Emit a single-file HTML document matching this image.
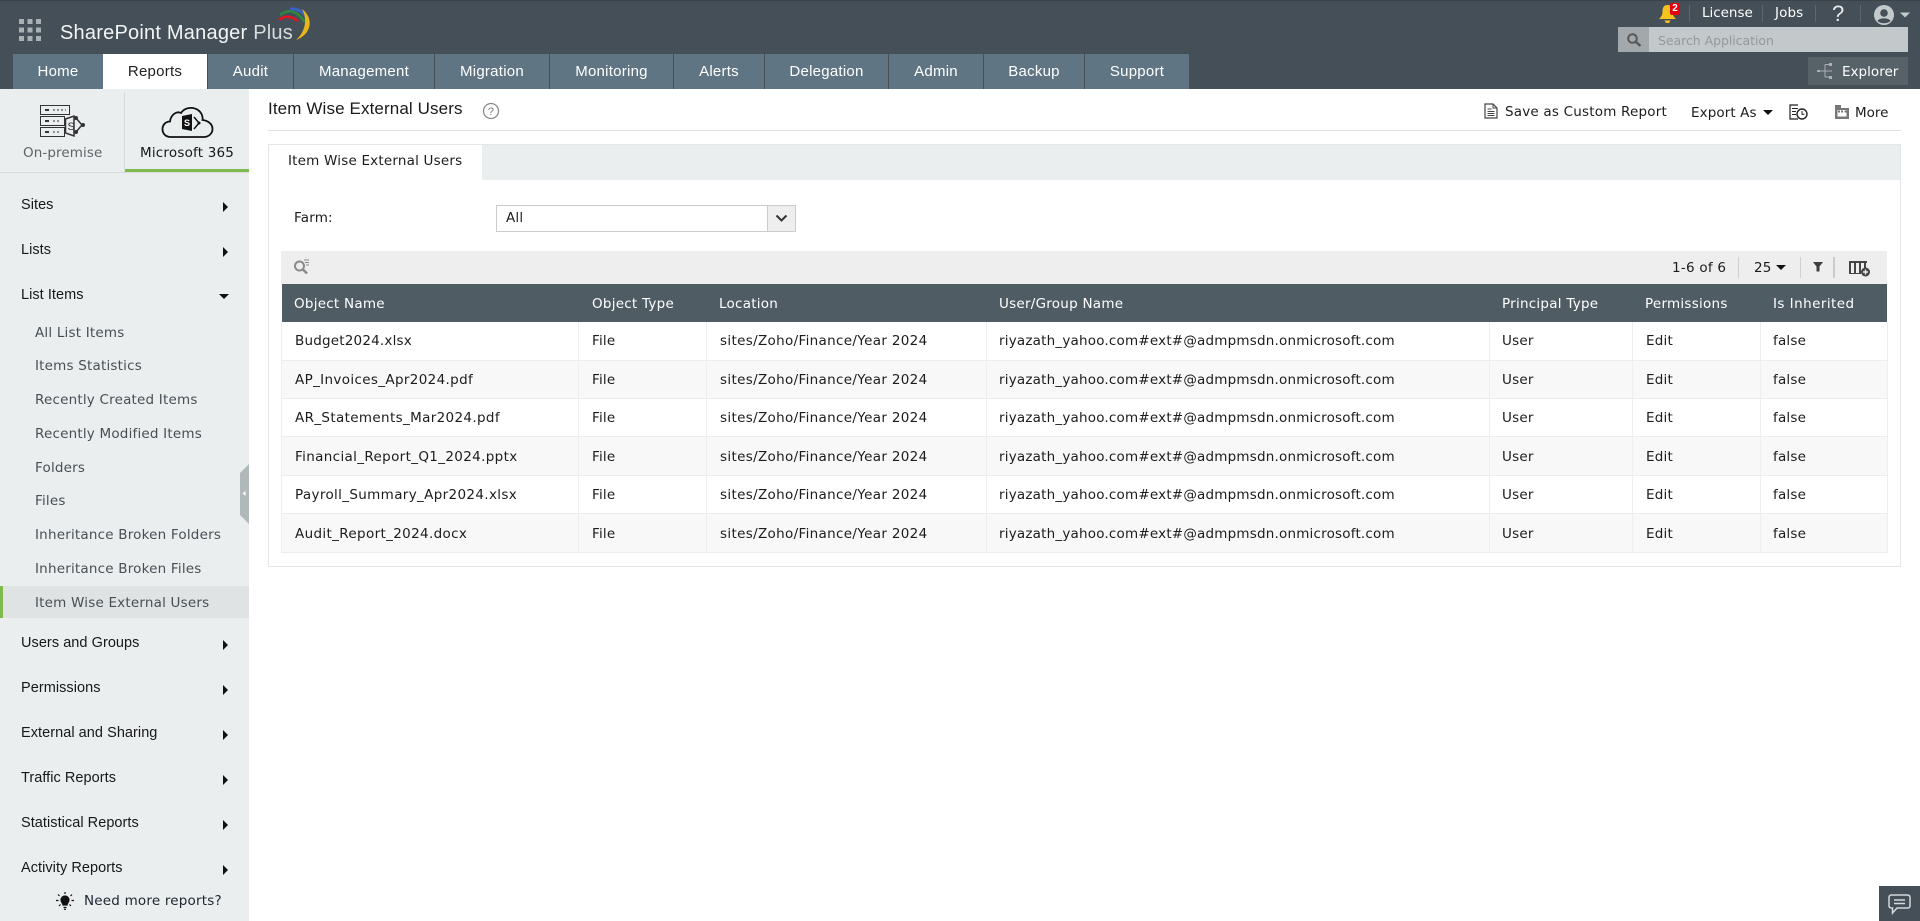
<!DOCTYPE html>
<html lang="en"><head><meta charset="utf-8"><title>SharePoint Manager Plus</title>
<style>
html,body{margin:0;padding:0;width:1920px;height:921px;overflow:hidden;background:#fff}
body{position:relative;font-family:"DejaVu Sans",sans-serif;font-size:13.5px;color:#1c1c1c;letter-spacing:.2px}
.a{position:absolute;white-space:nowrap;height:20px;line-height:20px}
.b{position:absolute}
.l{font-family:"Liberation Sans",sans-serif}
.tab{position:absolute;top:54px;height:35px;line-height:36px;background:#5f7583;color:#fff;text-align:center;font-family:"Liberation Sans",sans-serif;font-size:15px;letter-spacing:.25px}
.h{font-family:"Liberation Sans",sans-serif;font-size:14.5px;left:21px;color:#16181c;letter-spacing:.05px}
.s{left:35px;color:#474f55}
.ar{position:absolute;left:223px;width:0;height:0;border-left:5px solid #111;border-top:5px solid transparent;border-bottom:5px solid transparent}
.th{color:#fff;top:294px;letter-spacing:.25px}
.td{color:#1c1c1c}
.u{letter-spacing:.35px}
.loc{letter-spacing:.33px}
.row{position:absolute;left:282px;width:1605px;border-bottom:1px solid #ededed;box-sizing:border-box}
.vl{position:absolute;width:1px;top:322px;height:231px;background:#eeeeee}
</style></head><body>
<!-- Header -->
<div class="b" style="left:0;top:0;width:1920px;height:89px;background:#444f57;border-top:1px solid #3a4147;box-sizing:border-box"></div>
<svg class="b" style="left:19px;top:19px" width="23" height="23"><g fill="#a9b1b5"><rect x="0" y="0" width="5" height="5"/><rect x="8.5" y="0" width="5" height="5"/><rect x="17" y="0" width="5" height="5"/><rect x="0" y="8.500" width="5" height="5"/><rect x="8.500" y="8.500" width="5" height="5"/><rect x="17" y="8.500" width="5" height="5"/><rect x="0" y="17" width="5" height="5"/><rect x="8.500" y="17" width="5" height="5"/><rect x="17" y="17" width="5" height="5"/></g></svg>
<div class="a l" style="left:60px;top:21px;height:24px;line-height:24px;font-size:20px;color:#f4f5f5;letter-spacing:.22px">SharePoint Manager <span style="color:#d8dcde">Plus</span></div>
<svg class="b" style="left:274px;top:6px" width="40" height="38" viewBox="0 0 40 38" fill="none">
<path d="M5 14Q13 7 24 15" stroke="#e8141c" stroke-width="2.500"/>
<path d="M6 9Q19 -1 31 16" stroke="#2d8a3d" stroke-width="2.500"/>
<path d="M16 3Q28 2 34 14" stroke="#3a62c4" stroke-width="3"/>
<path d="M28 3C40 12 38 28 22 34C31 26 34 14 28 3Z" fill="#e8b51a"/>
</svg>

<div class="tab" style="left:13px;width:90px">Home</div>
<div class="tab" style="left:103px;width:104px;background:#fff;color:#222">Reports</div>
<div class="tab" style="left:208px;width:85px">Audit</div>
<div class="tab" style="left:294px;width:140px">Management</div>
<div class="tab" style="left:435px;width:114px">Migration</div>
<div class="tab" style="left:550px;width:123px">Monitoring</div>
<div class="tab" style="left:674px;width:90px">Alerts</div>
<div class="tab" style="left:765px;width:123px">Delegation</div>
<div class="tab" style="left:889px;width:94px">Admin</div>
<div class="tab" style="left:984px;width:100px">Backup</div>
<div class="tab" style="left:1085px;width:104px">Support</div>

<!-- top right -->
<svg class="b" style="left:1658px;top:4px" width="20" height="20" viewBox="0 0 20 20"><path d="M9.500 1C5.500 1 4.500 4 4.500 7.500C4.500 11 3 13 1 15L18 15C16 13 14.500 11 14.500 7.500C14.500 4 13.500 1 9.500 1Z" fill="#f6c31c"/><path d="M6.500 16.500h6L11 19H8Z" fill="#f6c31c"/></svg>
<div class="b" style="left:1670px;top:3px;width:10px;height:12px;background:#e3000f;border-radius:2px;color:#fff;font:bold 10px/12px 'Liberation Sans',sans-serif;text-align:center;letter-spacing:0">2</div>
<div class="b" style="left:1689px;top:5px;width:1px;height:17px;background:#5d676e"></div>
<div class="b" style="left:1762px;top:5px;width:1px;height:17px;background:#5d676e"></div>
<div class="b" style="left:1815px;top:5px;width:1px;height:17px;background:#5d676e"></div>
<div class="b" style="left:1860px;top:5px;width:1px;height:17px;background:#5d676e"></div>
<div class="a" style="left:1702px;top:3px;color:#fff;letter-spacing:-.02px">License</div>
<div class="a" style="left:1775px;top:3px;color:#fff;letter-spacing:.1px">Jobs</div>
<div class="a l" style="left:1832px;top:3px;color:#e8eaeb;font-size:22px;height:22px;line-height:22px;letter-spacing:0">?</div>
<svg class="b" style="left:1874px;top:5px" width="38" height="21" viewBox="0 0 38 21"><circle cx="10" cy="10" r="10" fill="#c4c9cc"/><circle cx="10" cy="8" r="3.800" fill="#444f57"/><path d="M3.500 16C5 12.500 15 12.500 16.500 16C13 19 7 19 3.500 16Z" fill="#444f57"/><path d="M26 7.500h10l-5 5Z" fill="#c4c9cc"/></svg>
<div class="b" style="left:1618px;top:27px;width:290px;height:25px;background:#c3c8ca"></div>
<div class="b" style="left:1618px;top:27px;width:31px;height:25px;background:#a3a8aa"></div>
<svg class="b" style="left:1626px;top:32px" width="16" height="16" viewBox="0 0 16 16" fill="none" stroke="#55595c"><circle cx="6.500" cy="6.500" r="4.300" stroke-width="2"/><path d="M10 10l4.500 4" stroke-width="2.500"/></svg>
<div class="a" style="left:1658px;top:31px;color:#96999b;font-size:12.500px;letter-spacing:-.05px">Search Application</div>
<div class="b" style="left:1808px;top:57px;width:100px;height:28px;background:#566168"></div>
<svg class="b" style="left:1816px;top:62px" width="18" height="18" viewBox="0 0 18 18" fill="none" stroke="#aab0b4"><path d="M9 2.500V15M9 2.500h4M9 15h4M2 9h14"/><rect x="13" y="1" width="3" height="3" fill="#aab0b4" stroke="none"/><rect x="13" y="14" width="3" height="3" fill="#aab0b4" stroke="none"/><rect x="1" y="8" width="3" height="2" fill="#aab0b4" stroke="none"/></svg>
<div class="a" style="left:1842px;top:62px;color:#fff;font-size:13.500px;letter-spacing:.02px">Explorer</div>

<!-- Sidebar -->
<div class="b" style="left:0;top:89px;width:249px;height:832px;background:#ebeeef"></div>
<div class="b" style="left:124px;top:92px;width:1px;height:80px;background:#d8dcdd"></div>
<div class="b" style="left:0;top:172px;width:249px;height:1px;background:#d8dcdd"></div>
<div class="b" style="left:125px;top:169px;width:124px;height:3px;background:#7fba4d"></div>
<svg class="b" style="left:40px;top:105px" width="46" height="33" viewBox="0 0 46 33" fill="none" stroke="#333">
<rect x=".5" y=".5" width="29" height="9"/><rect x=".5" y="11.500" width="24" height="9"/><rect x=".5" y="22.500" width="24" height="9"/>
<path d="M5 5h4M5 16h4M5 27h4" stroke-width="2"/><path d="M13 5h13M13 16h8M13 27h8" stroke-dasharray="2 2"/>
<path d="M25.500 14L34 11V31L25.500 28Z" fill="#ebeeef" stroke-width="1.500"/><path d="M36 13l6 7-6 7" stroke-width="1.500"/><circle cx="36" cy="13" r="1.500" fill="#333"/><circle cx="43" cy="20" r="1.500" fill="#333"/><circle cx="36" cy="27" r="1.500" fill="#333"/>
<text x="27.500" y="25" font-family="Liberation Sans" font-size="11" fill="#333" stroke="none">S</text></svg>
<svg class="b" style="left:161px;top:106px" width="53" height="32" viewBox="0 0 53 32" fill="none"><path d="M10 31C4 31 1.500 27 1.500 23C1.500 18.500 5 15.500 9 15.500C10 8 16 5 20 7C23 2 31 0 37 4C41 7 42 11 41.500 14C47 14.500 51.500 18 51.500 23C51.500 28 47 31 43 31Z" stroke="#111" stroke-width="1.800"/><path d="M21 10L31 8V25L21 23Z" fill="#111"/><path d="M33 11l5 6-5 6" stroke="#111" stroke-width="1.500"/><circle cx="38" cy="17" r="1.500" fill="#111"/><text x="23" y="20" font-family="Liberation Sans" font-size="9" font-weight="bold" fill="#fff">S</text></svg>
<div class="a" style="left:23px;top:143px;color:#5d6468;letter-spacing:.1px">On-premise</div>
<div class="a" style="left:140px;top:143px;color:#15181c">Microsoft 365</div>

<div class="a h" style="top:195px">Sites</div><div class="ar" style="top:202px"></div>
<div class="a h" style="top:240px">Lists</div><div class="ar" style="top:247px"></div>
<div class="a h" style="top:285px">List Items</div><div class="b" style="left:219px;top:294px;width:0;height:0;border-top:5px solid #111;border-left:5px solid transparent;border-right:5px solid transparent"></div>
<div class="a s" style="top:323px">All List Items</div>
<div class="a s" style="top:356px">Items Statistics</div>
<div class="a s" style="top:390px">Recently Created Items</div>
<div class="a s" style="top:424px">Recently Modified Items</div>
<div class="a s" style="top:458px">Folders</div>
<div class="a s" style="top:491px">Files</div>
<div class="a s" style="top:525px">Inheritance Broken Folders</div>
<div class="a s" style="top:559px">Inheritance Broken Files</div>
<div class="b" style="left:0;top:586px;width:249px;height:32px;background:#e0e3e3"></div>
<div class="b" style="left:0;top:586px;width:3px;height:32px;background:#7fba4d"></div>
<div class="a s" style="top:593px">Item Wise External Users</div>
<div class="a h" style="top:633px">Users and Groups</div><div class="ar" style="top:640px"></div>
<div class="a h" style="top:678px">Permissions</div><div class="ar" style="top:685px"></div>
<div class="a h" style="top:723px">External and Sharing</div><div class="ar" style="top:730px"></div>
<div class="a h" style="top:768px">Traffic Reports</div><div class="ar" style="top:775px"></div>
<div class="a h" style="top:813px">Statistical Reports</div><div class="ar" style="top:820px"></div>
<div class="a h" style="top:858px">Activity Reports</div><div class="ar" style="top:865px"></div>
<svg class="b" style="left:56px;top:892px" width="18" height="18" viewBox="0 0 18 18" stroke="#111" stroke-width="1.200"><path d="M9 4C6.500 4 5 6 5 8C5 10.500 7 11 7 13H11C11 11 13 10.500 13 8C13 6 11.500 4 9 4Z" fill="#111"/><path d="M9 0v2M2 2.500l1.500 1.500M16 2.500L14.500 4M0 8.500h2.500M15.500 8.500H18M3 14l1.500-1.500M15 14l-1.500-1.500M7.500 15.500h3M8 17.300h2"/></svg>
<div class="a" style="left:84px;top:891px;color:#1c2530">Need more reports?</div>
<svg class="b" style="left:240px;top:464px" width="9" height="60" viewBox="0 0 9 60"><path d="M9 0V60L0 51V9Z" fill="#b1b8ba"/><path d="M5.500 27v5l-3-2.500Z" fill="#fff"/></svg>

<!-- Title -->
<div class="a l" style="left:268px;top:99px;font-size:17px;color:#1a1a1a;letter-spacing:.12px">Item Wise External Users</div>
<svg class="b" style="left:482px;top:102px" width="18" height="18" viewBox="0 0 18 18" fill="none"><circle cx="9" cy="9" r="7.500" stroke="#8a8a8a" stroke-width="1.300"/><text x="9" y="13" text-anchor="middle" font-family="Liberation Sans" font-size="11" fill="#7a7a7a">?</text></svg>
<div class="b" style="left:268px;top:130px;width:1633px;height:1px;background:#e2e2e2"></div>
<svg class="b" style="left:1484px;top:103px" width="14" height="16" viewBox="0 0 14 16" fill="none" stroke="#444"><path d="M1 1H9L13 5V15H1Z" stroke-width="1.200"/><path d="M9 1V5H13M3.500 6h4M3.500 8.500h7M3.500 10.500h7M3.500 12.500h7"/></svg>
<div class="a" style="left:1505px;top:102px">Save as Custom Report</div>
<div class="a" style="left:1691px;top:103px;letter-spacing:.1px">Export As</div>
<div class="b" style="left:1763px;top:110px;width:0;height:0;border-top:5px solid #111;border-left:5px solid transparent;border-right:5px solid transparent"></div>
<svg class="b" style="left:1789px;top:104px" width="19" height="16" viewBox="0 0 19 16" fill="none" stroke="#222"><path d="M9 1H1V15H9" stroke-width="1.200"/><path d="M3 4.500h6M3 7.500h4M3 10.500h4"/><circle cx="13" cy="10" r="5" stroke-width="1.400"/><path d="M13 7v3.300h2.500"/></svg>
<svg class="b" style="left:1835px;top:105px" width="14" height="14" viewBox="0 0 14 14"><path d="M0 0H6V3H14V14H0Z" fill="#777"/><rect x="2.500" y="5" width="9" height="6.500" fill="#fff"/><path d="M6 5.500h2v2H6ZM9.500 5.500h2v2h-2ZM3 5.500h2v2H3Z" fill="#777"/></svg>
<div class="a" style="left:1855px;top:103px;letter-spacing:0">More</div>

<!-- Panel -->
<div class="b" style="left:268px;top:144px;width:1633px;height:423px;border:1px solid #e4e7e8;box-sizing:border-box"></div>
<div class="b" style="left:269px;top:145px;width:1631px;height:35px;background:#ebeeef"></div>
<div class="b" style="left:269px;top:145px;width:213px;height:35px;background:#fff"></div>
<div class="a" style="left:288px;top:151px">Item Wise External Users</div>
<div class="a" style="left:294px;top:208px">Farm:</div>
<div class="b" style="left:496px;top:205px;width:300px;height:27px;border:1px solid #cacccd;box-sizing:border-box"></div>
<div class="b" style="left:767px;top:206px;width:28px;height:25px;background:#eeeeee;border-left:1px solid #cacccd;box-sizing:border-box"></div>
<svg class="b" style="left:775px;top:214px" width="13" height="9" viewBox="0 0 13 9" fill="none"><path d="M1.500 1.500L6.500 6.500L11.500 1.500" stroke="#333" stroke-width="2"/></svg>
<div class="a" style="left:506px;top:208px">All</div>

<!-- grid toolbar -->
<div class="b" style="left:281px;top:251px;width:1606px;height:33px;background:#eeeeee"></div>
<svg class="b" style="left:293px;top:258px" width="18" height="18" viewBox="0 0 18 18" fill="none" stroke="#8a8a8a"><circle cx="6.500" cy="8" r="4.500" stroke-width="2"/><path d="M10 11.500l4 4" stroke-width="2.500"/><path d="M11 2h5M12 4.500h4M13 7h3" stroke-width="1"/></svg>
<div class="a" style="left:1672px;top:258px;letter-spacing:.25px">1-6 of 6</div>
<div class="b" style="left:1738px;top:257px;width:1px;height:21px;background:#d0d0d0"></div>
<div class="a" style="left:1754px;top:258px">25</div>
<div class="b" style="left:1776px;top:265px;width:0;height:0;border-top:5px solid #111;border-left:5px solid transparent;border-right:5px solid transparent"></div>
<div class="b" style="left:1800px;top:257px;width:1px;height:21px;background:#d0d0d0"></div>
<svg class="b" style="left:1813px;top:262px" width="10" height="10" viewBox="0 0 10 10"><path d="M0 0H10L6.500 4.500V9.500H3.500V4.500Z" fill="#3f3f3f"/></svg>
<div class="b" style="left:1833px;top:257px;width:2px;height:21px;background:#c8cccd"></div>
<svg class="b" style="left:1849px;top:260px" width="22" height="17" viewBox="0 0 22 17"><path d="M0 1H18V3H0ZM0 3h2V13H0ZM5 3H7V13H5ZM10 3h2V13h-2ZM15 3h2V9h-2ZM0 13H12V14H0Z" fill="#444"/><circle cx="16.500" cy="12" r="4.500" fill="#444"/><path d="M14 12h5M16.500 9.500v5" stroke="#eee" stroke-width="1.400"/></svg>

<!-- Table -->
<div class="b" style="left:282px;top:284px;width:1605px;height:38px;background:#4f5c64"></div>
<div class="a th" style="left:294px">Object Name</div>
<div class="a th" style="left:592px">Object Type</div>
<div class="a th" style="left:719px">Location</div>
<div class="a th" style="left:999px">User/Group Name</div>
<div class="a th" style="left:1502px">Principal Type</div>
<div class="a th" style="left:1645px">Permissions</div>
<div class="a th" style="left:1773px;letter-spacing:.45px">Is Inherited</div>

<div class="row" style="top:322px;height:39px;background:#fff"></div>
<div class="row" style="top:361px;height:38px;background:#f8f8f8"></div>
<div class="row" style="top:399px;height:38px;background:#fff"></div>
<div class="row" style="top:437px;height:39px;background:#f8f8f8"></div>
<div class="row" style="top:476px;height:38px;background:#fff"></div>
<div class="row" style="top:514px;height:39px;background:#f8f8f8"></div>
<div class="vl" style="left:281px"></div><div class="vl" style="left:578px"></div><div class="vl" style="left:706px"></div><div class="vl" style="left:986px"></div><div class="vl" style="left:1489px"></div><div class="vl" style="left:1632px"></div><div class="vl" style="left:1760px"></div><div class="vl" style="left:1887px"></div>

<div class="a td" style="left:295px;top:331px">Budget2024.xlsx</div><div class="a td" style="left:592px;top:331px">File</div><div class="a td loc" style="left:720px;top:331px">sites/Zoho/Finance/Year 2024</div><div class="a td" style="left:999px;top:331px">riyazath_yahoo.com#ext#@admpmsdn.onmicrosoft.com</div><div class="a td" style="left:1502px;top:331px">User</div><div class="a td" style="left:1646px;top:331px">Edit</div><div class="a td" style="left:1773px;top:331px">false</div>
<div class="a td u" style="left:295px;top:370px">AP_Invoices_Apr2024.pdf</div><div class="a td" style="left:592px;top:370px">File</div><div class="a td loc" style="left:720px;top:370px">sites/Zoho/Finance/Year 2024</div><div class="a td" style="left:999px;top:370px">riyazath_yahoo.com#ext#@admpmsdn.onmicrosoft.com</div><div class="a td" style="left:1502px;top:370px">User</div><div class="a td" style="left:1646px;top:370px">Edit</div><div class="a td" style="left:1773px;top:370px">false</div>
<div class="a td u" style="left:295px;top:408px">AR_Statements_Mar2024.pdf</div><div class="a td" style="left:592px;top:408px">File</div><div class="a td loc" style="left:720px;top:408px">sites/Zoho/Finance/Year 2024</div><div class="a td" style="left:999px;top:408px">riyazath_yahoo.com#ext#@admpmsdn.onmicrosoft.com</div><div class="a td" style="left:1502px;top:408px">User</div><div class="a td" style="left:1646px;top:408px">Edit</div><div class="a td" style="left:1773px;top:408px">false</div>
<div class="a td u" style="left:295px;top:447px">Financial_Report_Q1_2024.pptx</div><div class="a td" style="left:592px;top:447px">File</div><div class="a td loc" style="left:720px;top:447px">sites/Zoho/Finance/Year 2024</div><div class="a td" style="left:999px;top:447px">riyazath_yahoo.com#ext#@admpmsdn.onmicrosoft.com</div><div class="a td" style="left:1502px;top:447px">User</div><div class="a td" style="left:1646px;top:447px">Edit</div><div class="a td" style="left:1773px;top:447px">false</div>
<div class="a td u" style="left:295px;top:485px">Payroll_Summary_Apr2024.xlsx</div><div class="a td" style="left:592px;top:485px">File</div><div class="a td loc" style="left:720px;top:485px">sites/Zoho/Finance/Year 2024</div><div class="a td" style="left:999px;top:485px">riyazath_yahoo.com#ext#@admpmsdn.onmicrosoft.com</div><div class="a td" style="left:1502px;top:485px">User</div><div class="a td" style="left:1646px;top:485px">Edit</div><div class="a td" style="left:1773px;top:485px">false</div>
<div class="a td u" style="left:295px;top:524px">Audit_Report_2024.docx</div><div class="a td" style="left:592px;top:524px">File</div><div class="a td loc" style="left:720px;top:524px">sites/Zoho/Finance/Year 2024</div><div class="a td" style="left:999px;top:524px">riyazath_yahoo.com#ext#@admpmsdn.onmicrosoft.com</div><div class="a td" style="left:1502px;top:524px">User</div><div class="a td" style="left:1646px;top:524px">Edit</div><div class="a td" style="left:1773px;top:524px">false</div>

<!-- chat -->
<div class="b" style="left:1879px;top:886px;width:41px;height:35px;background:#444f57"></div>
<svg class="b" style="left:1888px;top:894px" width="23" height="21" viewBox="0 0 23 21" fill="none" stroke="#d5d9db" stroke-width="1.500"><path d="M3.500 1H19.500Q22 1 22 3.500V11.500Q22 14 19.500 14H9L4.500 19V14H3.500Q1 14 1 11.500V3.500Q1 1 3.500 1Z"/><path d="M6 6h11M6 9.500h11"/></svg>
</body></html>
